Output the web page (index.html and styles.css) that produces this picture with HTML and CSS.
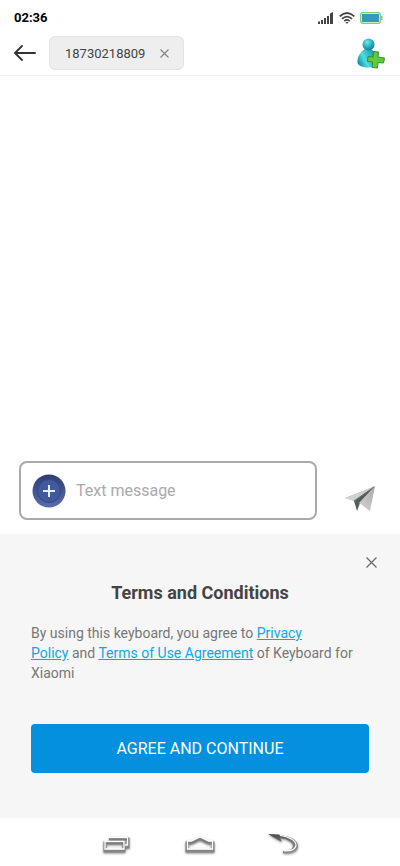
FILE: index.html
```html
<!DOCTYPE html>
<html lang="en">
<head>
<meta charset="utf-8">
<meta name="viewport" content="width=device-width, initial-scale=1">
<title>New message</title>
<link rel="stylesheet" href="styles.css">
</head>
<body>
<div class="status">
  <time class="clock">02:36</time>
  <div class="status-icons">
    <svg width="16" height="12" viewBox="0 0 16 12" fill="#444"><path d="M0 9.500h2V12H0zM3 8h2v4H3zM6 6h2v6H6zM9 4h2v8H9zM12 1.500l3-1.500v12h-3z"/></svg>
    <svg width="16" height="12" viewBox="0 0 16 12" fill="none" stroke="#444" stroke-width="1.700"><path d="M.7 4.300Q8-2.300 15.300 4.300M3 6.800Q8 2.300 13 6.800M5.300 9.100Q8 6.800 10.700 9.100"/><path d="M6.500 10h3L8 12z" fill="#444" stroke="none"/></svg>
    <svg width="23" height="12" viewBox="0 0 23 12"><rect x=".7" y=".7" width="19.600" height="10.600" rx="2" fill="#e9fbe2" stroke="#7dcb74" stroke-width="1.300"/><rect x="2" y="2" width="17" height="8" fill="#359bb5"/><path d="M21 4h1.500v4H21z" fill="#7dcb74"/></svg>
  </div>
</div>
<header class="header">
  <button class="icon-button" aria-label="Back">
    <svg width="22" height="16" viewBox="0 0 22 16" fill="none" stroke="#333" stroke-width="1.800" stroke-linecap="round" stroke-linejoin="round"><path d="M21 8H1M8 1L1 8l7 7"/></svg>
  </button>
  <div class="chip">
    <span>18730218809</span>
    <button class="icon-button" aria-label="Remove recipient">
      <svg width="9" height="9" viewBox="0 0 9 9" fill="none" stroke="#858585" stroke-width="1.200"><path d="M.5.5l8 8M8.500.5l-8 8"/></svg>
    </button>
  </div>
  <button class="icon-button add-contact" aria-label="Add contact">
    <svg width="28" height="31" viewBox="0 0 28 31">
      <defs>
        <radialGradient id="head" cx=".4" cy=".3" r=".7"><stop offset="0" stop-color="#7ee3e8"/><stop offset=".55" stop-color="#25b4c3"/><stop offset="1" stop-color="#137f96"/></radialGradient>
        <linearGradient id="torso" x1="0" y1=".7" x2="1" y2=".2"><stop offset="0" stop-color="#168ca1"/><stop offset=".35" stop-color="#4cdde2"/><stop offset="1" stop-color="#148da2"/></linearGradient>
      </defs>
      <path d="M8 11C3 14 0 19 .5 25c1 3 6 4.500 11 4.500 4 0 8-1 8-4C20 19 18 14 14 11z" fill="url(#torso)"/>
      <circle cx="11.500" cy="6.500" r="6" fill="url(#head)"/>
      <path d="M16.500 13.500l5 .5-.5 5 6.500 1-1 5-5.500-.5-.5 5.500-5.500-.5.500-5.500-5-.500.5-5 5 .5z" fill="#5ecb38" stroke="#3d8a33" stroke-linejoin="round"/>
    </svg>
  </button>
</header>
<main class="thread"></main>
<form class="composer">
  <div class="message-box">
    <button type="button" class="icon-button" aria-label="Add attachment">
      <svg width="34" height="34" viewBox="0 0 34 34">
        <defs><linearGradient id="ring" x1="0" y1="0" x2="0" y2="1"><stop offset="0" stop-color="#303c73"/><stop offset="1" stop-color="#596daf"/></linearGradient></defs>
        <circle cx="17" cy="17" r="16.500" fill="url(#ring)"/><circle cx="17" cy="17" r="11.500" fill="#415a9d" stroke="#34477f"/>
        <path d="M17 11v12M11 17h12" stroke="#e4f2ff" stroke-width="2"/>
      </svg>
    </button>
    <input class="message-input" type="text" placeholder="Text message" aria-label="Text message">
  </div>
  <button class="icon-button send" aria-label="Send">
    <svg width="30" height="26" viewBox="0 0 30 26">
      <defs><linearGradient id="wing" x1="0" y1="1" x2="1" y2="0"><stop offset="0" stop-color="#d8d4d6"/><stop offset="1" stop-color="#aaa8a9"/></linearGradient></defs>
      <path d="M0 12L30 0 9 15z" fill="#c2c6c4"/><path d="M9 15L30 0 15 17l-3 8z" fill="#565b5b"/><path d="M30 0L14 17l11 8z" fill="url(#wing)"/><path d="M0 12l9 3L28 1z" fill="#cfd2d0"/><path d="M9 15L29 1" stroke="#666b69"/>
    </svg>
  </button>
</form>
<section class="terms" aria-labelledby="terms-title">
  <button class="icon-button close" aria-label="Close">
    <svg width="11" height="11" viewBox="0 0 11 11" fill="none" stroke="#666" stroke-width="1.200"><path d="M.5.5l10 10M10.500.5l-10 10"/></svg>
  </button>
  <h1 class="terms-title" id="terms-title">Terms and Conditions</h1>
  <p class="terms-text">By using this keyboard, you agree to <a href="#privacy">Privacy<br>Policy</a> and <a href="#terms">Terms of Use Agreement</a> of Keyboard for<br>Xiaomi</p>
  <button class="agree">AGREE AND CONTINUE</button>
</section>
<nav class="system-nav" aria-label="System">
  <button class="icon-button nav-button" aria-label="Recent apps">
    <svg width="32" height="24" viewBox="0 0 32 24" fill="none"><g stroke="#858585" stroke-width="3"><path d="M8 7h19v8h-3"/><path d="M4 11h19v8H4z"/></g><g stroke="#fff" stroke-width="1.300"><path d="M8 5.500h18.500V13H24"/><path d="M4 9.500h19V17H4z"/></g><path d="M5 11h17M8 7h18" stroke="#777"/></svg>
  </button>
  <button class="icon-button nav-button" aria-label="Home">
    <svg width="32" height="24" viewBox="0 0 32 24" fill="none"><path d="M3 19V11h4l9-4 9 4h4v8z" stroke="#858585" stroke-width="3"/><path d="M3.500 17V9h4L16 5l8.500 4h4v8z" stroke="#fff" stroke-width="1.300"/><path d="M5 10.500h3l8-4 8 4h3" stroke="#777"/></svg>
  </button>
  <button class="icon-button nav-button" aria-label="System back">
    <svg width="32" height="24" viewBox="0 0 32 24"><defs><linearGradient id="turn" x1="0" y1="0" x2="1" y2="1"><stop offset="0" stop-color="#444"/><stop offset="1" stop-color="#999"/></linearGradient></defs><path d="M1 2l11 .500 1 1C23 4 31 8 31 14c0 6-7 8-15 7v-2c6 0 10-2 10-5 0-4-5-7-13-8l2 4z" fill="url(#turn)"/><path d="M13 3.500c9 1 16 5 16 9.500s-5 6-12 6" fill="none" stroke="#fff" stroke-width="1.100"/></svg>
  </button>
</nav>
</body>
</html>
```
FILE: styles.css
```css
* {
  box-sizing: border-box;
}

body {
  display: flex;
  flex-direction: column;
  min-height: 100vh;
  margin: 0;
  background: #fff;
  color: #444;
  font-family: Roboto, "Liberation Sans", sans-serif;
}

button,
input {
  font: inherit;
}

svg {
  display: block;
}

.icon-button {
  flex: none;
  padding: 0;
  border: 0;
  background: none;
}

.status {
  display: flex;
  align-items: center;
  justify-content: space-between;
  padding: 8px 17px 0 14px;
}

.clock {
  color: #000;
  font-size: 13px;
  font-weight: 700;
  line-height: 20px;
}

.status-icons {
  display: flex;
  gap: 5px;
}

.header {
  display: flex;
  align-items: center;
  gap: 13px;
  padding: 8px 15px 5px 14px;
  border-bottom: 1px solid #eee;
}

.chip {
  display: flex;
  align-items: center;
  gap: 15px;
  height: 34px;
  padding: 0 14px 0 15px;
  border: 1px solid #e3e3e3;
  border-radius: 6px;
  background: #eee;
  font-size: 13px;
}

.add-contact {
  margin-left: auto;
}

.thread {
  flex: 1;
}

.composer {
  display: flex;
  align-items: center;
  padding: 0 25px 14px 19px;
}

.message-box {
  display: flex;
  flex: 1;
  align-items: center;
  gap: 10px;
  min-width: 0;
  height: 59px;
  padding: 0 11px;
  border: 2px solid #aaa;
  border-radius: 8px;
}

.message-input {
  flex: 1;
  min-width: 0;
  padding: 0;
  border: 0;
  outline: 0;
  background: none;
  font-size: 16px;
}

.message-input::placeholder {
  color: #aaa;
}

.send {
  margin: 16px 0 0 28px;
}

.terms {
  display: flex;
  flex-direction: column;
  padding: 23px 31px 45px;
  background: #f6f6f6;
}

.close {
  align-self: flex-end;
  margin-right: -8px;
}

.terms-title {
  margin: 13px 0 18px;
  font-size: 18px;
  font-weight: 700;
  line-height: 24px;
  text-align: center;
}

.terms-text {
  margin: 0 0 41px;
  color: #777;
  font-size: 14px;
  line-height: 20px;
}

.terms-text a {
  color: #12a5e5;
}

.agree {
  height: 49px;
  border: 0;
  border-radius: 4px;
  background: #0391df;
  color: #fff;
  font-size: 16px;
}

.system-nav {
  display: flex;
  justify-content: center;
  gap: 51px;
  height: 48px;
  padding-top: 14px;
}

.nav-button {
  height: 24px;
  filter: drop-shadow(0 1px 1px #888);
}
```
